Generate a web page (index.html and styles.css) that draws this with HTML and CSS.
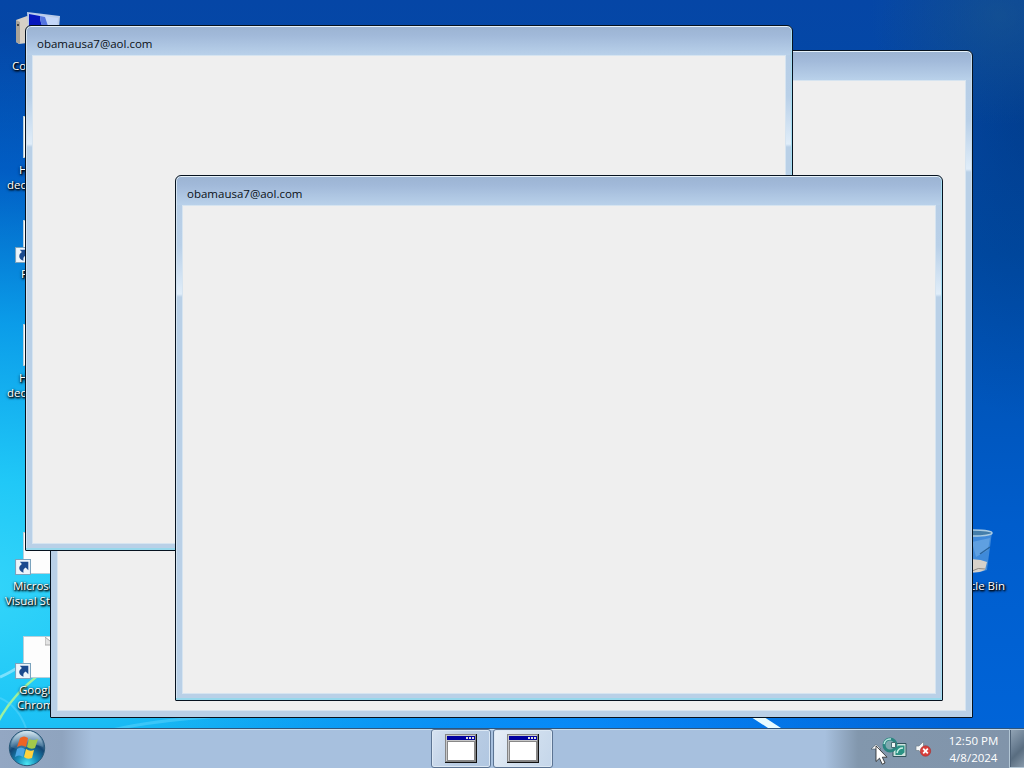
FILE: index.html
```html
<!DOCTYPE html>
<html lang="en">
<head>
    <meta charset="UTF-8">
    <meta name="viewport" content="width=device-width, initial-scale=1.0">
    <title>Desktop</title>
    <link rel="stylesheet" href="styles.css">
</head>
<body>
    <div class="screen">
        <div class="desktop">
            <svg class="wallpaper" viewBox="0 0 1024 728">
                <path d="M0 677 Q22 668 52 640" fill="none" stroke="#9feaff" stroke-width="3" opacity=".7"/>
                <path d="M-2 722 Q12 695 40 674" fill="none" stroke="#9cf0a0" stroke-width="2.5"/>
                <path d="M0 698 Q18 706 26 728" fill="none" stroke="#6cdcff" stroke-width="2" opacity=".4"/>
                <path d="M112 730 Q150 721 210 717" fill="none" stroke="#70dcff" stroke-width="3" opacity=".4"/>
                <path d="M751 717 L764 717 L781 728 L768 728Z" fill="#e8fcff"/>
            </svg>

            <div class="shortcut computer">
                <svg class="icon" width="48" height="48" viewBox="0 0 48 48">
                    <path d="M3 10 L14 6 L22 8 V32 L6 34 L3 32Z" fill="#d6d0c6"/>
                    <path d="M3 10 L7 12 V34 L3 32Z" fill="#aaa398"/>
                    <path d="M4 14h2v2h-2z" fill="#444"/>
                    <path d="M14 2 L47 6 L45 31 L16 30Z" fill="#b9cbe8"/>
                    <path d="M16 4 L45 8 L43 28 L17 28Z" fill="#c3d6f8"/>
                    <path d="M16 4 L27 6 Q27 13 31 19 L16 19Z" fill="#0718bd"/>
                    <path d="M27 6 L32 7 L36 19 L31 19 Q27 13 27 6Z" fill="#5475df"/>
                </svg>
                <div class="label">Computer</div>
            </div>

            <div class="shortcut page-one">
                <div class="page"></div>
                <div class="label"><span class="short">H</span><span>dec</span></div>
            </div>

            <div class="shortcut page-two">
                <div class="page"></div>
                <svg class="arrow" width="16" height="16" viewBox="0 0 15 15"><path d="M.5.5h14v14h-14z" fill="#edf5fb" stroke="#7ba3bd"/><path d="M4.500 2.500h8v8L10 8C8 9 7.500 10.500 8 13C3.500 11.500 2.500 7.500 6.500 4.800Z" fill="#1b4a8e"/></svg>
                <div class="label">F</div>
            </div>

            <div class="shortcut page-three">
                <div class="page"></div>
                <div class="label"><span class="short">H</span><span>dec</span></div>
            </div>

            <div class="shortcut studio">
                <div class="page"></div>
                <svg class="arrow" width="16" height="16" viewBox="0 0 15 15"><path d="M.5.5h14v14h-14z" fill="#edf5fb" stroke="#7ba3bd"/><path d="M4.500 2.500h8v8L10 8C8 9 7.500 10.500 8 13C3.500 11.500 2.500 7.500 6.500 4.800Z" fill="#1b4a8e"/></svg>
                <div class="label"><span class="short">Microsoft</span><span>Visual Studio</span></div>
            </div>

            <div class="shortcut chrome">
                <div class="page folded">
                    <svg width="11" height="11" viewBox="0 0 11 11"><path d="M0 0v8h10Z" fill="#e4e4e4" stroke="#aaa"/></svg>
                </div>
                <svg class="arrow" width="16" height="16" viewBox="0 0 15 15"><path d="M.5.5h14v14h-14z" fill="#edf5fb" stroke="#7ba3bd"/><path d="M4.500 2.500h8v8L10 8C8 9 7.500 10.500 8 13C3.500 11.500 2.500 7.500 6.500 4.800Z" fill="#1b4a8e"/></svg>
                <div class="label"><span class="short">Google</span><span>Chrome</span></div>
            </div>

            <div class="shortcut bin">
                <svg class="icon" width="42" height="46" viewBox="0 0 42 46">
                    <path d="M2 4 L40 4 L35 42 Q22 47 8 42Z" fill="#5a9ce0" opacity=".7"/>
                    <path d="M20 14 L38 10 L36 22 L24 29Z" fill="#a9d3f2" opacity=".3"/>
                    <path d="M28 26 L38 19" stroke="#28629c" stroke-width="1.500"/>
                    <path d="M9 33 Q24 29 35 34 L33 42 Q22 47 10 42Z" fill="#d6d1ca"/>
                    <path d="M20 43 Q26 39 33 41" fill="none" stroke="#8d8984"/>
                    <ellipse cx="21" cy="5" rx="19" ry="3" fill="#447eab" stroke="#a9cbe2" stroke-width="1.500"/>
                </svg>
                <div class="label">Recycle Bin</div>
            </div>

            <div class="window back">
                <div class="titlebar"></div>
                <div class="content"></div>
            </div>
            <div class="window middle">
                <div class="titlebar">obamausa7@aol.com</div>
                <div class="content"></div>
            </div>
            <div class="window front">
                <div class="titlebar">obamausa7@aol.com</div>
                <div class="content"></div>
            </div>
        </div>

        <div class="taskbar">
            <svg class="start" width="38" height="38" viewBox="0 0 38 38">
                <defs>
                    <radialGradient id="orb" cx=".5" cy=".95" r=".95">
                        <stop offset="0" stop-color="#4ce6f3"/>
                        <stop offset=".3" stop-color="#188fbb"/>
                        <stop offset=".62" stop-color="#124674"/>
                        <stop offset="1" stop-color="#9fbfd2"/>
                    </radialGradient>
                    <linearGradient id="gloss" x2="0" y2="1">
                        <stop offset="0" stop-color="#e7f3f9" stop-opacity=".8"/>
                        <stop offset="1" stop-color="#7eaecb" stop-opacity=".2"/>
                    </linearGradient>
                </defs>
                <circle cx="19" cy="19" r="17.700" fill="url(#orb)" stroke="#285879"/>
                <path d="M3 18A16 16 0 0 1 35 18Q27 14 19 18Q11 22 3 18Z" fill="url(#gloss)"/>
                <path d="M12 9Q16 6 20 9L18 18Q14 15 9 18Z" fill="#ed6424"/>
                <path d="M21 10Q25 12 30 10L27 19Q23 21 19 18Z" fill="#a4c94a"/>
                <path d="M9 20Q13 17 17 20L15 28Q11 25 7 28Z" fill="#4ba6e4"/>
                <path d="M18 20Q22 23 26 21L24 29Q19 31 16 28Z" fill="#ffd23e"/>
            </svg>

            <div class="tasks">
                <div class="task">
                    <svg width="32" height="29" viewBox="0 0 32 29"><path d="M0 0h32v29H0z" fill="#111"/><path d="M0 0h31v28H0z" fill="#858585"/><path d="M1 1h29v26H1z" fill="#c8c8c8"/><path d="M2 2h28v4H2z" fill="#0000a0"/><path d="M21 3h2v2h-2zM24 3h2v2h-2zM27 3h2v2h-2z" fill="#ddd"/><path d="M2 7h28v20H2z" fill="#888"/><path d="M3 8h26v18H3z" fill="#fff"/></svg>
                </div>
                <div class="task bright">
                    <svg width="32" height="29" viewBox="0 0 32 29"><path d="M0 0h32v29H0z" fill="#111"/><path d="M0 0h31v28H0z" fill="#858585"/><path d="M1 1h29v26H1z" fill="#c8c8c8"/><path d="M2 2h28v4H2z" fill="#0000a0"/><path d="M21 3h2v2h-2zM24 3h2v2h-2zM27 3h2v2h-2z" fill="#ddd"/><path d="M2 7h28v20H2z" fill="#888"/><path d="M3 8h26v18H3z" fill="#fff"/></svg>
                </div>
            </div>

            <div class="tray">
                <svg width="64" height="28" viewBox="0 0 64 28">
                    <path d="M-1 14L4 9.500L9 14Z" fill="#fff" stroke="#4a5d6d" stroke-width=".7"/>
                    <path d="M22 8.500h12v13H21v-4Z" fill="#cfe4df" stroke="#31545c"/>
                    <path d="M23.500 13l3-2.500h6v7l-3 2.500h-6Z" fill="#2b9284"/>
                    <path d="M25 18Q26 13 31 13" fill="none" stroke="#c9f0e6" stroke-width="1.500"/>
                    <circle cx="18" cy="10" r="6" fill="#7fa9b0" stroke="#2a8580" stroke-width="3"/>
                    <path d="M12 9A6.500 6.500 0 0 1 19 4" fill="none" stroke="#b5e8de" stroke-width="1.500"/>
                    <path d="M19.500 7.500h4v5h-4z" fill="#eef6f5" stroke="#466b72"/>
                    <path d="M44 11h3l4.500-4.500v14l-4.500-5h-3z" fill="#f5f7f8" stroke="#73828e" stroke-width=".7"/>
                    <circle cx="53.500" cy="16" r="5.200" fill="#d83f3b" stroke="#a72a2a" stroke-width=".6"/>
                    <path d="M51.200 13.700l4.600 4.600M55.800 13.700l-4.600 4.600" stroke="#fff" stroke-width="1.800"/>
                </svg>
                <div class="clock"><span>12:50 PM</span><span>4/8/2024</span></div>
                <div class="show-desktop"></div>
            </div>
        </div>

        <svg class="cursor" width="14" height="21" viewBox="0 0 14 21"><path d="M1 1V16.500L4.500 13.200L7.200 19.200L10 18L7.300 12.200H12Z" fill="#fff" stroke="#222" stroke-width=".8"/></svg>
    </div>
</body>
</html>
```

FILE: styles.css
```css
* {
    box-sizing: border-box;
}
body {
    margin: 0;
    font-family: "Open Sans", "Noto Sans", sans-serif;
    font-size: 11.5px;
}
.screen {
    width: 1024px;
    height: 768px;
    position: relative;
    overflow: hidden;
    display: flex;
    flex-direction: column;
}
.desktop {
    position: relative;
    height: 728px;
    overflow: hidden;
    background:
        radial-gradient(ellipse 130px 110px at 1000px 15px, rgba(40, 100, 140, 0.4), transparent),
        radial-gradient(ellipse 160px 300px at 1030px 120px, rgba(0, 42, 100, 0.35), transparent),
        radial-gradient(ellipse 400px 120px at 560px 740px, rgba(10, 145, 255, 0.8), transparent),
        radial-gradient(ellipse 960px 560px at -40px 590px, #35d6fa 0%, #20c8f7 20%, rgba(12, 166, 240, 0.88) 48%, rgba(0, 116, 230, 0.45) 75%, transparent 100%),
        linear-gradient(#0546a6, #004da9 35%, #005dcc 72%, #0064d8);
}
.wallpaper {
    position: absolute;
    inset: 0;
}
.shortcut {
    position: absolute;
    width: 74px;
    height: 80px;
    left: 0;
    color: white;
    line-height: 15px;
    white-space: nowrap;
}
.icon {
    position: absolute;
}
.label {
    position: absolute;
    top: 51px;
    left: 5px;
    display: flex;
    flex-direction: column;
    text-shadow: 1px 1px 2px #000, 1px 1px 2px #000, 0 1px 3px rgba(0, 0, 0, 0.8);
}
.page {
    position: absolute;
    left: 23px;
    top: 5px;
    width: 34px;
    height: 42px;
    background: #fdfdfd;
    border: 1px solid #b8cfda;
}
.folded {
    display: flex;
    justify-content: flex-end;
}
.arrow {
    position: absolute;
    left: 15px;
    top: 32px;
}
.computer {
    top: 7px;
}
.computer .icon {
    left: 13px;
    top: 3px;
}
.computer .label {
    left: 12px;
}
.page-one {
    top: 111px;
}
.page-two {
    top: 215px;
}
.page-three {
    top: 319px;
}
.page-one .label, .page-three .label {
    left: 7px;
}
.page-one .short, .page-three .short {
    padding-left: 12px;
}
.page-two .label {
    left: 21px;
}
.studio {
    top: 527px;
}
.studio .short {
    padding-left: 8px;
}
.chrome {
    top: 631px;
}
.chrome .label {
    left: 17px;
}
.chrome .short {
    padding-left: 2px;
}
.bin {
    left: 932px;
    top: 527px;
}
.bin .icon {
    left: 20px;
    top: 1px;
}
.bin .label {
    left: auto;
    right: 1px;
}
.window {
    position: absolute;
    display: flex;
    flex-direction: column;
    padding: 0 6px 6px;
    border: 1px solid #06121f;
    border-radius: 6px 6px 1px 1px;
    background:
        linear-gradient(#9bb3d2, #a2bada 35%, #b9d1ea 100%) 0 0 / 100% 29px no-repeat,
        linear-gradient(#b5cce5, #b9d0e8 70px, #e0edf9 118px, #b9d0e7 121px, #b9d0e7);
    box-shadow: inset 0 1px #e6f2fa, inset -1px 0 #a4def2, inset 0 -2px #98d8ec, inset 1px 0 #d4e4f2;
}
.titlebar {
    height: 29px;
    flex-shrink: 0;
    padding-left: 5px;
    line-height: 35px;
    color: #0a1016;
}
.content {
    flex: 1;
    background: #efefef;
    border: 1px solid #d6e4f0;
}
.back {
    left: 50px;
    top: 50px;
    width: 923px;
    height: 668px;
    box-shadow: inset 0 1px #e6f2fa, inset -1px 0 #c4dcf0;
}
.middle {
    left: 25px;
    top: 25px;
    width: 768px;
    height: 526px;
}
.front {
    left: 175px;
    top: 175px;
    width: 768px;
    height: 526px;
}
.taskbar {
    height: 40px;
    display: flex;
    justify-content: space-between;
    border-top: 1px solid #30557b;
    box-shadow: inset 0 1px #c9dfee;
    background: linear-gradient(90deg, #93a7c3, #8fa4bf 62px, #a7c0de 92px, #a7c0de 825px, #8297ad 858px, #8194aa 1010px);
}
.start {
    width: 38px;
    margin-left: 8px;
}
.tasks {
    display: flex;
    gap: 2px;
    margin-left: 66px;
}
.task {
    width: 60px;
    height: 39px;
    display: flex;
    align-items: center;
    justify-content: center;
    border: 1px solid #5c7493;
    border-radius: 3px;
    background: linear-gradient(115deg, #d6e2f1, #bacde4 50%, #b1c7e1);
    box-shadow: inset 0 0 0 1px #dce8f4;
}
.task.bright {
    background: linear-gradient(115deg, #e9f0f8, #d2e0ef 50%, #c5d6ea);
}
.tray {
    display: flex;
    align-items: center;
    color: white;
}
.tray svg {
    overflow: visible;
}
.clock {
    width: 73px;
    padding-left: 2px;
    display: flex;
    flex-direction: column;
    align-items: center;
    line-height: 17px;
}
.show-desktop {
    width: 15px;
    height: 39px;
    border: 1px solid #b3c6d5;
    border-right: none;
    box-shadow: inset 1px 0 #4c6075;
    background: linear-gradient(135deg, #93a5b6, #687c90 45%, #596d80 60%, #8799aa);
}
.cursor {
    position: absolute;
    left: 875px;
    top: 745px;
}
```
